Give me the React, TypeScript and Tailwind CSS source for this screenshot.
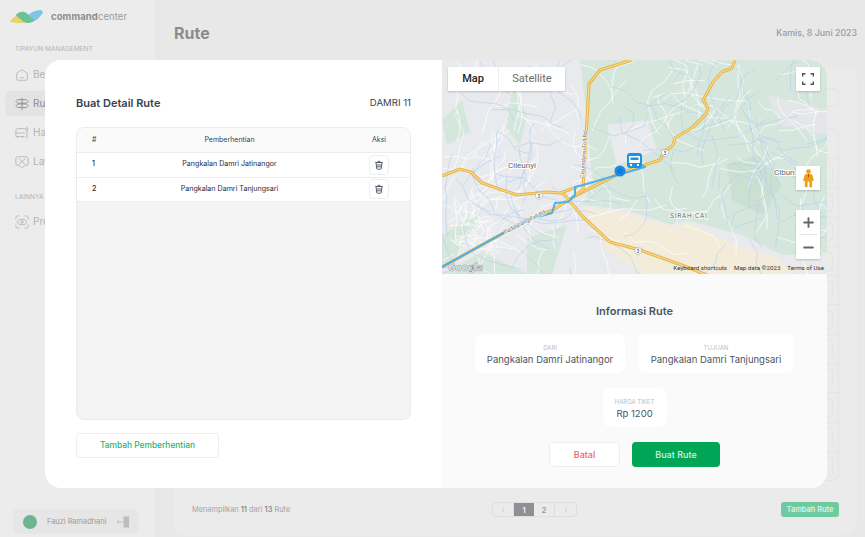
import { ChevronLeft, ChevronRight, Minus, Plus, Trash2 } from 'lucide-react';

const font = { fontFamily: 'Inter, "Open Sans", sans-serif' };

const stops = [
  { id: 1, name: 'Pangkalan Damri Jatinangor' },
  { id: 2, name: 'Pangkalan Damri Tanjungsari' },
];

// thin map lines, same result on every render
function scatterLines(seed: number, count: number, x0: number, y0: number, w: number, h: number, step: number) {
  let s = seed;
  const rnd = () => {
    s = (s * 16807) % 2147483647;
    return s / 2147483647;
  };
  const out: string[] = [];
  for (let i = 0; i < count; i++) {
    let x = x0 + rnd() * w;
    let y = y0 + rnd() * h;
    let a = rnd() * Math.PI * 2;
    let d = `M${x.toFixed(1)} ${y.toFixed(1)}`;
    const n = 3 + Math.floor(rnd() * 4);
    for (let j = 0; j < n; j++) {
      a += (rnd() - 0.5) * 1.4;
      x += Math.cos(a) * step * (0.5 + rnd());
      y += Math.sin(a) * step * (0.5 + rnd());
      d += ` L${x.toFixed(1)} ${y.toFixed(1)}`;
    }
    out.push(d);
  }
  return out;
}

function TrashIcon({ className }: { className: string }) {
  return (
    <svg viewBox="0 0 12 12" className={className} fill="none" stroke="currentColor" strokeWidth="1.1">
      <path d="M1.5 3 H10.5 M4 3 C4 1 8 1 8 3" />
      <path d="M2.5 3 L3.2 10.5 Q3.3 11 4 11 H8 Q8.7 11 8.8 10.5 L9.5 3" />
      <path d="M2.9 6 H9.1 M3.1 8.2 H8.9" />
    </svg>
  );
}

function Logo() {
  return (
    <svg width="34" height="14" viewBox="0 0 36 16" className="shrink-0" preserveAspectRatio="none">
      <path d="M0 13 C4 7 9 4 13 7 L19 13 C15 16 5 15 0 13Z" fill="#e9d36f" />
      <path d="M33 0 C35 1 34 2 35 3 C31 8 28 13 23 13 L17 8 C21 3 28 0 33 0Z" fill="#7cc7e4" />
      <path d="M6 6 C10 1 16 1 19 5 L26 12 C22 16 17 15 14 13Z" fill="#6cc195" />
    </svg>
  );
}

function Sidebar() {
  const rowIcon = 'w-[14px] h-[14px] shrink-0 text-[#b5b5b5]';
  return (
    <aside className="w-[155px] h-full shrink-0 flex flex-col bg-[#ececec] pl-[5px] pr-[17px]">
      <div className="flex items-center gap-[7px] pl-[5px] pt-[2px] h-[32px]">
        <Logo />
        <span className="text-[9.5px] text-[#9a9a9a] tracking-[0.1px]">
          <b className="font-bold text-[#8c8c8c]">command</b>center
        </span>
      </div>
      <p className="mt-[13px] pl-[10px] text-[6.6px] leading-[9px] text-[#b3b3b3]">TIPAYUN MANAGEMENT</p>
      <div className="mt-[8px] flex flex-col gap-[4px] text-[10px] text-[#b3b3b3]">
        <div className="h-[25px] flex items-center gap-[4px] pl-[10px]">
          <svg viewBox="0 0 16 16" className={rowIcon} fill="none" stroke="currentColor">
            <path d="M2 6 L8 2 L14 6 V13 Q14 14 13 14 H3 Q2 14 2 13Z" />
            <path d="M6 11 H10" />
          </svg>
          Beranda
        </div>
        <div className="h-[25px] flex items-center gap-[4px] pl-[10px] rounded-md bg-[#e3e3e3] text-[#8c8c8c]">
          <svg viewBox="0 0 16 16" className={rowIcon} fill="none" stroke="#8c8c8c">
            <path d="M8 1 V15 M3 3 H13 L15 5 L13 7 H3 L1 5Z M3 8 H13 L15 10 L13 12 H3 L1 10Z" />
          </svg>
          Rute
        </div>
        <div className="h-[25px] flex items-center gap-[4px] pl-[10px]">
          <svg viewBox="0 0 16 16" className={rowIcon} fill="none" stroke="currentColor">
            <path d="M11 3 H3 Q1 3 1 5 V12 H11 M1 8 H11 M3 12 V14 M9 12 V14" />
            <circle cx="13.5" cy="3.5" r="1.5" />
            <path d="M13.5 5 V14" />
          </svg>
          Halte
        </div>
        <div className="h-[25px] flex items-center gap-[4px] pl-[10px]">
          <svg viewBox="0 0 16 16" className={rowIcon} fill="none" stroke="currentColor">
            <path d="M3 2 H13 Q15 2 15 4 V10 Q15 12 13 12 H11 L8 15 L5 12 H3 Q1 12 1 10 V4 Q1 2 3 2Z M4 4 L12 11 M12 4 L4 11" />
          </svg>
          Layanan
        </div>
      </div>
      <p className="mt-[19px] pl-[10px] text-[6.6px] leading-[9px] text-[#b3b3b3]">LAINNYA</p>
      <div className="mt-[7px] h-[25px] flex items-center gap-[4px] pl-[10px] text-[10px] text-[#b3b3b3]">
        <svg viewBox="0 0 16 16" className={rowIcon} fill="none" stroke="currentColor">
          <path d="M1 5 V3 Q1 1 3 1 H5 M11 1 H13 Q15 1 15 3 V5 M15 11 V13 Q15 15 13 15 H11 M5 15 H3 Q1 15 1 13 V11" />
          <ellipse cx="8" cy="8" rx="5" ry="3.2" />
          <circle cx="8" cy="8" r="1.5" />
        </svg>
        Preview
      </div>
      <div className="mt-auto mb-[3px] ml-[8px] w-[125px] h-[25px] shrink-0 rounded bg-[#e6e6e6] flex items-center pl-[10px]">
        <span className="w-[14px] h-[14px] rounded-full bg-[#6bb58f]" />
        <span className="ml-[10px] text-[7.4px] text-[#9b9b9b] whitespace-nowrap">Fauzi Ramadhani</span>
        <svg viewBox="0 0 14 12" className="ml-[11px] w-[13px] h-[12px]">
          <path d="M7 0 H13 V12 H7Z" fill="#bdbdbd" />
          <path d="M0 6 H6 M2 4 L0 6 L2 8" fill="none" stroke="#bdbdbd" />
        </svg>
      </div>
    </aside>
  );
}

function Background() {
  const rows = Array.from({ length: 11 }, (_, i) => i);
  return (
    <div className="flex-1 min-w-0 h-full flex flex-col bg-[#e8e8e8] pl-[19px] pr-[8px]">
      <header className="h-[68px] shrink-0 flex items-start justify-between pt-[24px]">
        <h1 className="text-[16px] leading-[18px] font-bold text-[#8c8c8c]">Rute</h1>
        <span className="text-[8.8px] leading-[18px] font-medium text-[#9a9a9a]">Kamis, 8 Juni 2023</span>
      </header>
      <div className="flex-1 flex flex-col rounded-xl mb-[2px] bg-[#ebebeb] pl-[18px] pr-[18px]">
        <div className="mt-[20px] self-end w-[40px] h-[19px] rounded border border-[#e4e4e4]" />
        <div className="mt-[21px] rounded-lg border border-[#e4e4e4]">
          <div className="h-[29px]" />
          {rows.map((r) => (
            <div key={r} className="h-[29.3px] border-t border-[#e4e4e4] flex items-center justify-end pr-[5px]">
              <span className="w-[28px] h-[19px] rounded border border-[#e4e4e4] flex items-center justify-center">
                <Trash2 className="w-[10px] h-[10px] text-[#9a9a9a]" />
              </span>
            </div>
          ))}
        </div>
        <div className="mt-auto mb-[18px] flex items-center h-[15px]">
          <p className="w-[300px] text-[7.4px] text-[#a3a3a3]">
            Menampilkan <b className="font-semibold text-[#8c8c8c]">11</b> dari <b className="font-semibold text-[#8c8c8c]">13</b> Rute
          </p>
          <div className="flex h-[15px] rounded-sm border border-[#dedede] text-[8px] text-[#9a9a9a]">
            <span className="w-[21px] flex items-center justify-center border-r border-[#dedede]"><ChevronLeft className="w-[8px] h-[8px] text-[#c0c0c0]" /></span>
            <span className="w-[20px] flex items-center justify-center bg-[#8f8f95] font-bold text-[#e8e8e8]">1</span>
            <span className="w-[21px] flex items-center justify-center border-r border-[#dedede] font-semibold">2</span>
            <span className="w-[21px] flex items-center justify-center"><ChevronRight className="w-[8px] h-[8px] text-[#c0c0c0]" /></span>
          </div>
          <button className="ml-auto w-[58px] h-[15px] rounded-[3px] bg-[#6fcb9f] text-[7.4px] font-semibold text-[#dcf2e7] whitespace-nowrap">Tambah Rute</button>
        </div>
      </div>
    </div>
  );
}

const fineWhites = [
  ...scatterLines(11, 55, 0, 0, 135, 214, 11),
  ...scatterLines(29, 70, 140, 0, 245, 200, 13),
  ...scatterLines(37, 40, 15, 145, 45, 45, 4),
];
const fineRivers = [
  ...scatterLines(53, 30, 0, 0, 135, 214, 14),
  ...scatterLines(71, 55, 140, 0, 245, 190, 14),
];

function RouteMap() {
  const toll = 'M0 207 L85 160 L111 150 L131 137 L178 113 L218 100 L222 92 L231 85 L233 78 L251 67 L264 54 L266 48 L261 40 L263 37 L271 22 L280 12 L290 8 L293 0';
  const north = 'M190 0 L158 10 L147 24 L145 60 L141 130 L131 137';
  const west = 'M0 116 L18 109 L29 112 L40 123 L75 135 L105 132 L118 133 L135 127';
  const south = 'M121 133 L141 157 L168 182 L198 190 L245 207 L265 215';
  return (
    <svg viewBox="0 0 385 214" className="block w-full h-[214px]" preserveAspectRatio="none">
      <rect width="385" height="214" fill="#e8eaed" />
      <path d="M138 0 L385 0 L385 195 L340 195 L300 175 L245 160 L230 165 L185 150 L141 145 L150 120 L145 60Z" fill="#d5e7dc" />
      <path d="M165 65 L205 60 L215 90 L175 105Z" fill="#e8eaed" />
      <path d="M325 35 L385 50 L385 75 L340 65Z" fill="#e4e6ea" />
      <path d="M141 147 L185 153 L231 167 L245 162 L298 187 L335 197 L350 214 L200 214 L165 190Z" fill="#f3ecdb" />
      <path d="M0 175 L40 150 L15 195 L0 205Z M72 28 L85 55 L78 85 L62 65Z M0 60 L20 40 L28 72 L5 85Z" fill="#d5e7dc" />
      <path d="M0 214 L40 192 L85 214Z M85 178 L125 165 L110 214 L85 214Z" fill="#d5e7dc" />
      <path d="M285 105 L315 95 L340 125 L320 155 L290 140Z" fill="#cbe0d2" />
      {fineWhites.map((d, i) => (
        <path key={i} d={d} fill="none" stroke="#ffffff" strokeWidth="0.7" />
      ))}
      {fineRivers.map((d, i) => (
        <path key={i} d={d} fill="none" stroke="#b4cff0" strokeWidth="0.6" />
      ))}
      {[toll, north, west, south].map((d) => (
        <g key={d}>
          <path d={d} fill="none" stroke="#e5b34e" strokeWidth="3.2" strokeLinejoin="round" />
          <path d={d} fill="none" stroke="#fbdc83" strokeWidth="1.2" strokeLinejoin="round" />
        </g>
      ))}
      <path d="M0 207 L85 160 L110 153 L113 143 L126 142 L133 135 L133 127 L141 125 L203 107 L200 105" fill="none" stroke="#4fb0ea" strokeWidth="2" strokeLinejoin="round" />
      <circle cx="178" cy="111" r="5.5" fill="#1e88e5" />
      <circle cx="178" cy="111" r="2.5" fill="#1178d3" />
      <rect x="185" y="93" width="15" height="15" rx="3" fill="#1f93e0" />
      <path d="M188 96 H197 Q198 96 198 97 V103 H187 V97 Q187 96 188 96Z" fill="#ffffff" />
      <rect x="188.5" y="97.5" width="8" height="2.5" fill="#1f93e0" />
      <rect x="188" y="104" width="2" height="2" fill="#ffffff" />
      <rect x="195" y="104" width="2" height="2" fill="#ffffff" />
      {[[97, 136], [223, 93], [196, 191]].map(([x, y]) => (
        <g key={x}>
          <path d={`M${x - 3} ${y - 3} H${x + 3} L${x + 3.5} ${y + 1} L${x} ${y + 4} L${x - 3.5} ${y + 1}Z`} fill="#ffffff" stroke="#9a9a9a" strokeWidth="0.5" />
          <text x={x} y={y + 2} fontSize="5" textAnchor="middle" fill="#444444" fontFamily="Roboto, sans-serif">3</text>
        </g>
      ))}
      <g fontFamily="Roboto, sans-serif">
        <text x="66" y="108" fontSize="8" fill="#5f6368" stroke="#ffffff" strokeWidth="2" paintOrder="stroke">Cileunyi</text>
        <text x="228" y="158" fontSize="6.5" letterSpacing="0.8" fill="#5f6368" stroke="#ffffff" strokeWidth="1.5" paintOrder="stroke">SIRAH CAI</text>
        <text x="332" y="115" fontSize="8" fill="#5f6368" stroke="#ffffff" strokeWidth="2" paintOrder="stroke">Cibun</text>
        <text transform="translate(142 118) rotate(-86)" fontSize="5.5" fill="#5f6368" stroke="#ffffff" strokeWidth="1.2" paintOrder="stroke">Cisumdawu Toll Rd</text>
        <text transform="translate(63 174) rotate(-27)" fontSize="5.5" fill="#5f6368" stroke="#ffffff" strokeWidth="1.2" paintOrder="stroke">Padalarang Toll Rd</text>
        <text x="6" y="211" fontSize="11" fontWeight="700" fill="#ffffff" stroke="#8a8f94" strokeWidth="0.5">Google</text>
      </g>
    </svg>
  );
}

function MapPanel() {
  return (
    <div className="relative h-[214px] shrink-0 overflow-hidden rounded-tr-2xl" style={{ fontFamily: 'Roboto, sans-serif' }}>
      <RouteMap />
      <div className="absolute left-[6px] top-[7px] h-[24px] flex bg-white shadow-[0_1px_2px_rgba(0,0,0,0.2)] text-[11px]">
        <span className="w-[50px] flex items-center justify-center font-medium text-[#222222]">Map</span>
        <span className="w-[67px] flex items-center justify-center text-[#6a6a6a] border-l border-[#eeeeee]">Satellite</span>
      </div>
      <div className="absolute right-[7px] top-[7px] w-[24px] h-[24px] bg-white flex items-center justify-center shadow-[0_1px_2px_rgba(0,0,0,0.2)]">
        <svg viewBox="0 0 12 12" className="w-[12px] h-[12px]" fill="none" stroke="#555555" strokeWidth="1.4">
          <path d="M0.7 3.5 V0.7 H3.5 M8.5 0.7 H11.3 V3.5 M11.3 8.5 V11.3 H8.5 M3.5 11.3 H0.7 V8.5" />
        </svg>
      </div>
      <div className="absolute right-[7px] top-[106px] w-[24px] h-[24px] bg-white flex items-center justify-center shadow-[0_1px_2px_rgba(0,0,0,0.2)]">
        <svg viewBox="0 0 12 20" className="w-[11px] h-[20px]">
          <circle cx="6" cy="3" r="2.6" fill="#e8a317" />
          <path d="M2 6 H10 L12 13 H10 V20 H7 V14 H5 V20 H2 V13 H0Z" fill="#e8a317" />
          <path d="M5 6 H7 L6 10Z" fill="#c0392b" />
        </svg>
      </div>
      <div className="absolute right-[7px] top-[150px] w-[24px] h-[49px] bg-white flex flex-col items-center shadow-[0_1px_2px_rgba(0,0,0,0.2)]">
        <span className="h-[24px] flex items-center"><Plus className="w-[15px] h-[15px] text-[#666666]" strokeWidth={3} /></span>
        <span className="w-[18px] h-px bg-[#e6e6e6]" />
        <span className="h-[24px] flex items-center"><Minus className="w-[15px] h-[15px] text-[#666666]" strokeWidth={3} /></span>
      </div>
      <div className="absolute right-[3px] bottom-0 h-[10px] flex items-center gap-[7px] text-[6.2px] text-[#333333] whitespace-nowrap">
        <span>Keyboard shortcuts</span>
        <span>Map data ©2023</span>
        <span>Terms of Use</span>
      </div>
    </div>
  );
}

function InfoCard({ label, value, className }: { label: string; value: string; className: string }) {
  return (
    <div className={`h-[39px] rounded-lg bg-white flex flex-col items-center justify-center pt-[2px] ${className}`}>
      <span className="text-[6px] leading-[9px] text-[#b7bccb]">{label}</span>
      <span className="mt-[1px] text-[9.5px] leading-[14px] text-[#4b5563] whitespace-nowrap">{value}</span>
    </div>
  );
}

function DetailModal() {
  return (
    <div className="absolute left-[45px] top-[60px] w-[782px] h-[428px] flex rounded-2xl overflow-hidden bg-white">
      <section className="w-[397px] shrink-0 flex flex-col pl-[31px] pr-[31px] pt-[36px] pb-[30px]">
        <div className="flex items-center justify-between h-[14px]">
          <h2 className="text-[11px] font-semibold text-[#374151]">Buat Detail Rute</h2>
          <span className="text-[9.6px] text-[#374151]">DAMRI 11</span>
        </div>
        <div className="mt-[17px] flex-1 rounded-lg border border-[#ececec] bg-[#f4f4f4] overflow-hidden">
          <div className="h-[25px] grid grid-cols-[32px_1fr_60px] items-center bg-[#fafafa] border-b border-[#ececec] text-[7px] text-[#374151]">
            <span className="pl-[15px]">#</span>
            <span className="text-center">Pemberhentian</span>
            <span className="text-center pr-[2px]">Aksi</span>
          </div>
          {stops.map((s) => (
            <div key={s.id} className="h-[24.6px] grid grid-cols-[32px_1fr_60px] items-center bg-white border-b border-[#ececec] text-[7.1px] text-[#1f2937]">
              <span className="pl-[15px] font-medium">{s.id}</span>
              <span className="text-center">{s.name}</span>
              <span className="flex justify-center pr-[2px]">
                <span className="w-[20px] h-[20px] rounded border border-[#efefef] flex items-center justify-center">
                  <TrashIcon className="w-[10px] h-[10px] text-[#4b5563]" />
                </span>
              </span>
            </div>
          ))}
        </div>
        <button className="mt-[13px] w-[143px] h-[25px] rounded border border-[#eeeeee] bg-white text-[8.4px] font-medium text-[#22b573] whitespace-nowrap">
          Tambah Pemberhentian
        </button>
      </section>
      <section className="flex-1 min-w-0 flex flex-col bg-[#fafafa]">
        <MapPanel />
        <div className="flex flex-col items-center pt-[30px]">
          <h3 className="text-[11px] leading-[14px] font-semibold text-[#4b5563]">Informasi Rute</h3>
          <div className="mt-[16px] flex gap-[13px]">
            <InfoCard label="DARI" value="Pangkalan Damri Jatinangor" className="w-[150px]" />
            <InfoCard label="TUJUAN" value="Pangkalan Damri Tanjungsari" className="w-[156px]" />
          </div>
          <InfoCard label="HARGA TIKET" value="Rp 1200" className="w-[64px] mt-[15px]" />
          <div className="mt-[15px] flex gap-[12px]">
            <button className="w-[71px] h-[25px] rounded border border-[#eeeeee] bg-white text-[9px] font-medium text-[#f0606a]">Batal</button>
            <button className="w-[88px] h-[25px] rounded bg-[#00a556] text-[9px] font-medium text-[#d9f3e5]">Buat Rute</button>
          </div>
        </div>
      </section>
    </div>
  );
}

export default function App() {
  return (
    <div className="relative w-[865px] h-[537px] overflow-hidden flex" style={font}>
      <Sidebar />
      <Background />
      <DetailModal />
    </div>
  );
}
